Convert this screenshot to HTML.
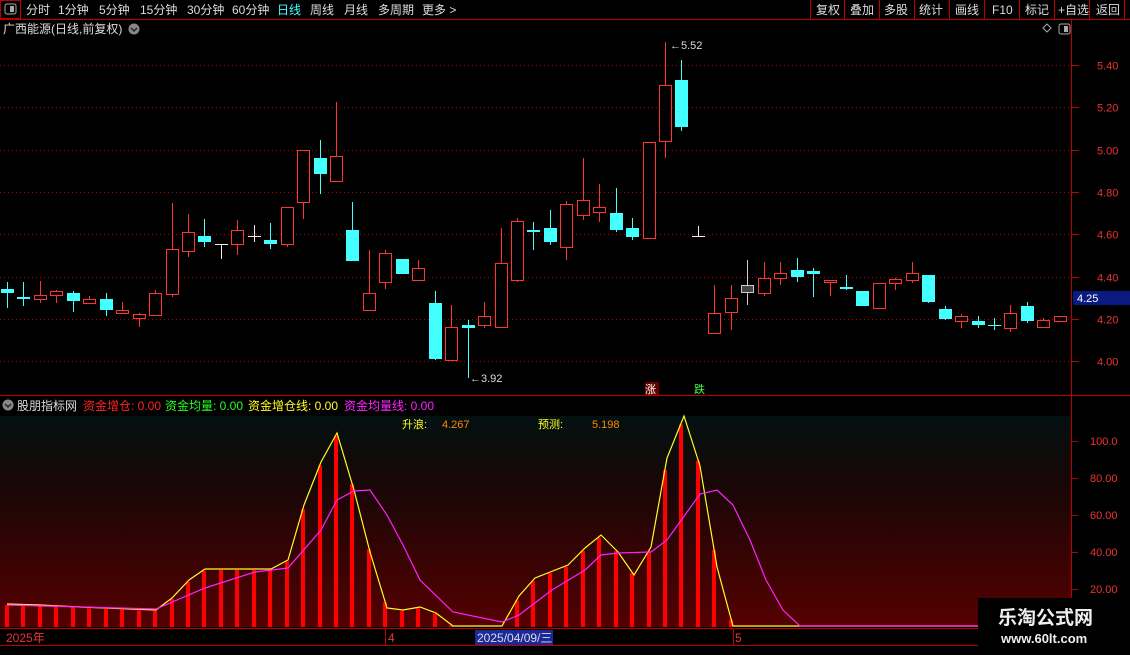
<!DOCTYPE html><html><head><meta charset="utf-8"><style>
body{margin:0;background:#000;width:1130px;height:650px;overflow:hidden;font-family:"Liberation Sans","Noto Sans CJK SC",sans-serif}
svg text{font-family:"Liberation Sans","Noto Sans CJK SC",sans-serif}
</style></head><body>
<svg id="s" width="1130" height="650" xmlns="http://www.w3.org/2000/svg">
<defs><linearGradient id="g" x1="0" y1="0" x2="0" y2="1"><stop offset="0" stop-color="#031010"/><stop offset="0.35" stop-color="#1a0606"/><stop offset="1" stop-color="#550000"/></linearGradient></defs>
<rect width="1130" height="650" fill="#000"/>
<line x1="0" y1="19.5" x2="1130" y2="19.5" stroke="#b00" />
<rect x="0.5" y="0.5" width="20" height="18" fill="none" stroke="#b00"/>
<rect x="5" y="4" width="11" height="10" rx="2" fill="none" stroke="#aaa"/><rect x="10" y="6" width="4" height="6" fill="#aaa"/>
<g font-size="12" fill="#ddd">
<text x="26" y="14">分时</text><text x="58" y="14">1分钟</text><text x="99" y="14">5分钟</text><text x="140" y="14">15分钟</text><text x="187" y="14">30分钟</text><text x="232" y="14">60分钟</text><text x="277" y="14" fill="#4ff">日线</text><text x="310" y="14">周线</text><text x="344" y="14">月线</text><text x="378" y="14">多周期</text><text x="422" y="14">更多 &gt;</text>
<text x="816" y="14">复权</text><text x="850" y="14">叠加</text><text x="884" y="14">多股</text><text x="919" y="14">统计</text><text x="955" y="14">画线</text><text x="992" y="14">F10</text><text x="1025" y="14">标记</text><text x="1058" y="14">+自选</text><text x="1096" y="14">返回</text>
</g>
<g stroke="#b00"><line x1="810.5" y1="0" x2="810.5" y2="19"/><line x1="844.5" y1="0" x2="844.5" y2="19"/><line x1="879.5" y1="0" x2="879.5" y2="19"/><line x1="914.5" y1="0" x2="914.5" y2="19"/><line x1="949.5" y1="0" x2="949.5" y2="19"/><line x1="984.5" y1="0" x2="984.5" y2="19"/><line x1="1019.5" y1="0" x2="1019.5" y2="19"/><line x1="1054.5" y1="0" x2="1054.5" y2="19"/><line x1="1089.5" y1="0" x2="1089.5" y2="19"/><line x1="1124.5" y1="0" x2="1124.5" y2="19"/>
<line x1="1071.5" y1="20" x2="1071.5" y2="650"/></g>
<text x="3" y="33" font-size="12" fill="#ddd">广西能源(日线,前复权)</text>
<circle cx="134" cy="29" r="5.5" fill="#888"/><path d="M131 28l3 3 3-3" stroke="#222" fill="none" stroke-width="1.5"/>
<path d="M1047 24l4 4-4 4-4-4z" fill="none" stroke="#aaa"/>
<rect x="1059" y="24" width="11" height="10" rx="2" fill="none" stroke="#aaa"/><rect x="1064" y="26" width="4" height="6" fill="#aaa"/>
<g id="grid" stroke="#a00" stroke-dasharray="1 3"></g>
<g font-size="11" fill="#e33" id="ax"></g>
<rect x="1073" y="291" width="57" height="14" fill="#0a1a80"/><text x="1077" y="302" font-size="11" fill="#fff">4.25</text>
<line x1="0" y1="395.5" x2="1130" y2="395.5" stroke="#b00"/>
<g id="c"></g>
<text x="670" y="49" font-size="11" fill="#ddd">←5.52</text>
<text x="470" y="382" font-size="11" fill="#ddd">←3.92</text>
<rect x="645" y="382" width="14" height="13" fill="#600"/><text x="645" y="393" font-size="11" fill="#fff">涨</text>
<text x="694" y="393" font-size="11" fill="#4f4">跌</text>
<circle cx="8" cy="405" r="5.5" fill="#888"/><path d="M5 404l3 3 3-3" stroke="#222" fill="none" stroke-width="1.5"/>
<g font-size="12"><text x="17" y="410" fill="#ddd">股朋指标网</text><text x="83" y="410" fill="#f22">资金增仓: 0.00</text><text x="165" y="410" fill="#2f2">资金均量: 0.00</text><text x="248" y="410" fill="#ff2">资金增仓线: 0.00</text><text x="344" y="410" fill="#f2f">资金均量线: 0.00</text></g>
<rect x="0" y="416" width="1071" height="211" fill="url(#g)"/>
<text x="402" y="428" font-size="11" fill="#ff2">升浪:</text><text x="442" y="428" font-size="11" fill="#f80">4.267</text>
<text x="538" y="428" font-size="11" fill="#ff2">预测:</text><text x="592" y="428" font-size="11" fill="#f80">5.198</text>
<g id="ind"></g>
<g font-size="11" fill="#e33"><text x="1090" y="445">100.0</text><text x="1090" y="482">80.00</text><text x="1090" y="519">60.00</text><text x="1090" y="556">40.00</text><text x="1090" y="593">20.00</text></g>
<g stroke="#b00"><line x1="1071" y1="441.5" x2="1078" y2="441.5"/><line x1="1071" y1="478.5" x2="1078" y2="478.5"/><line x1="1071" y1="515.5" x2="1078" y2="515.5"/><line x1="1071" y1="552.5" x2="1078" y2="552.5"/><line x1="1071" y1="589.5" x2="1078" y2="589.5"/>
<line x1="0" y1="628.5" x2="1130" y2="628.5"/><line x1="0" y1="645.5" x2="1130" y2="645.5"/></g>
<text x="6" y="642" font-size="12" fill="#e33">2025年</text><line x1="385.5" y1="629" x2="385.5" y2="645" stroke="#b00"/><text x="388" y="642" font-size="12" fill="#e33">4</text>
<rect x="475" y="630" width="78" height="15" fill="#1a2a9a"/><text x="477" y="642" font-size="12" fill="#ddd">2025/04/09/三</text>
<line x1="733.5" y1="629" x2="733.5" y2="645" stroke="#b00"/><text x="735" y="642" font-size="12" fill="#e33">5</text>
<rect x="978" y="598" width="152" height="52" fill="#000"/>
<text x="998" y="624" font-size="19" font-weight="bold" fill="#eee" font-family="Liberation Serif,Noto Serif CJK SC,serif">乐淘公式网</text>
<text x="1001" y="643" font-size="13" font-weight="bold" fill="#eee" font-family="Liberation Serif,serif">www.60lt.com</text>
</svg>
<script>
var N="http://www.w3.org/2000/svg";
function el(p,t,a){var e=document.createElementNS(N,t);for(var k in a)e.setAttribute(k,a[k]);p.appendChild(e);return e}
var grid=document.getElementById('grid'),ax=document.getElementById('ax');
[5.4,5.2,5.0,4.8,4.6,4.4,4.2,4.0].forEach(function(p){var y=Math.round(65+(5.4-p)*211.5)+.5;el(grid,'line',{x1:0,y1:y,x2:1070,y2:y});var t=el(ax,'text',{x:1097,y:y+4});t.textContent=p.toFixed(2);el(document.getElementById('s'),'line',{x1:1071,y1:y,x2:1079,y2:y,stroke:'#b00'})});
var d=[["c",289,293,282,308],["c",297,299,282,306],["r",295,299,281,303],["r",291,295,290,303],["c",293,301,291,312],["r",299,303,296,303],["c",299,310,293,316],["r",310,313,302,314],["r",314,318,313,327],["r",293,315,290,316],["r",249,294,203,297],["r",232,251,214,257],["c",236,242,219,247],["w",244,244,244,259],["r",230,244,220,255],["w",236,236,225,242],["c",240,244,223,249],["r",207,244,207,247],["r",150,202,150,219],["c",158,174,140,194],["r",156,181,102,181],["c",230,261,202,261],["r",293,310,250,310],["r",253,282,250,289],["c",259,274,259,274],["r",268,280,260,280],["c",303,359,291,360],["r",327,360,305,360],["c",325,328,320,378],["r",316,325,302,328],["r",263,327,228,327],["r",221,280,218,282],["c",230,232,222,250],["c",228,242,210,245],["r",204,247,201,260],["r",200,215,158,220],["r",207,212,184,222],["c",213,230,188,232],["c",228,237,218,240],["r",142,238,142,238],["r",85,141,42,158],["c",80,127,60,131],["w",236,236,226,236],["r",313,333,285,333],["r",298,312,285,330],["h",285,292,260,305],["r",278,293,262,296],["r",273,278,262,285],["c",270,277,258,282],["c",271,274,268,297],["r",280,282,280,296],["c",287,289,275,290],["c",291,306,291,306],["r",283,308,283,308],["r",279,283,278,290],["r",273,280,262,283],["c",275,302,275,303],["c",309,319,306,320],["r",316,321,314,328],["c",321,325,316,328],["c",325,326,318,330],["r",313,328,305,332],["c",306,321,302,323],["r",320,327,318,328],["r",316,321,316,322]];
var c=document.getElementById('c');
d.forEach(function(k,i){var x=Math.round(7+i*16.45);var col=k[0]=="r"?"#f33":k[0]=="c"?"#4ff":k[0]=="h"?"#ccc":"#eee";
el(c,'line',{x1:x+.5,y1:k[3],x2:x+.5,y2:k[4],stroke:col});
var h=Math.max(1,k[2]-k[1]);
if(k[0]=="c"||k[0]=="w")el(c,'rect',{x:x-6,y:k[1],width:13,height:h,fill:col});
else el(c,'rect',{x:x-5.5,y:k[1]+.5,width:12,height:h,fill:k[0]=="h"?'#444':'#000',stroke:col})});
var Y=[[7,604],[40,605],[80,607],[156,610],[172,598],[189,580],[205,569],[238,569],[271,569],[288,560],[304,505],[321,462],[337,433],[354,490],[370,552],[387,608],[403,610],[420,607],[436,613],[453,626],[502,626],[519,596],[535,578],[568,565],[585,548],[601,535],[618,552],[634,575],[651,547],[667,458],[684,416],[700,466],[717,567],[733,626],[1070,626]];
var M=[[7,605],[156,609],[205,588],[255,572],[288,568],[321,530],[337,500],[354,491],[370,490],[387,515],[403,545],[420,580],[453,612],[502,622],[519,615],[552,590],[585,570],[601,555],[618,553],[651,552],[667,540],[700,494],[717,490],[733,505],[750,540],[766,580],[783,610],[800,626],[1070,626]];
function at(P,x){for(var i=1;i<P.length;i++)if(x<=P[i][0]){var a=P[i-1],b=P[i];return a[1]+(b[1]-a[1])*(x-a[0])/(b[0]-a[0])}return P[P.length-1][1]}
var ind=document.getElementById('ind');
for(var i=0;i<65;i++){var x=Math.round(7+i*16.45);var y=at(Y,x);if(y<625)el(ind,'rect',{x:x-2,y:y+1,width:4,height:627-y-1,fill:'#f00'});}
el(ind,'polyline',{points:Y.map(function(p){return p.join(',')}).join(' '),fill:'none',stroke:'#ff2','stroke-width':1.2});
el(ind,'polyline',{points:M.map(function(p){return p.join(',')}).join(' '),fill:'none',stroke:'#f2f','stroke-width':1.2});
</script>
</body></html>
